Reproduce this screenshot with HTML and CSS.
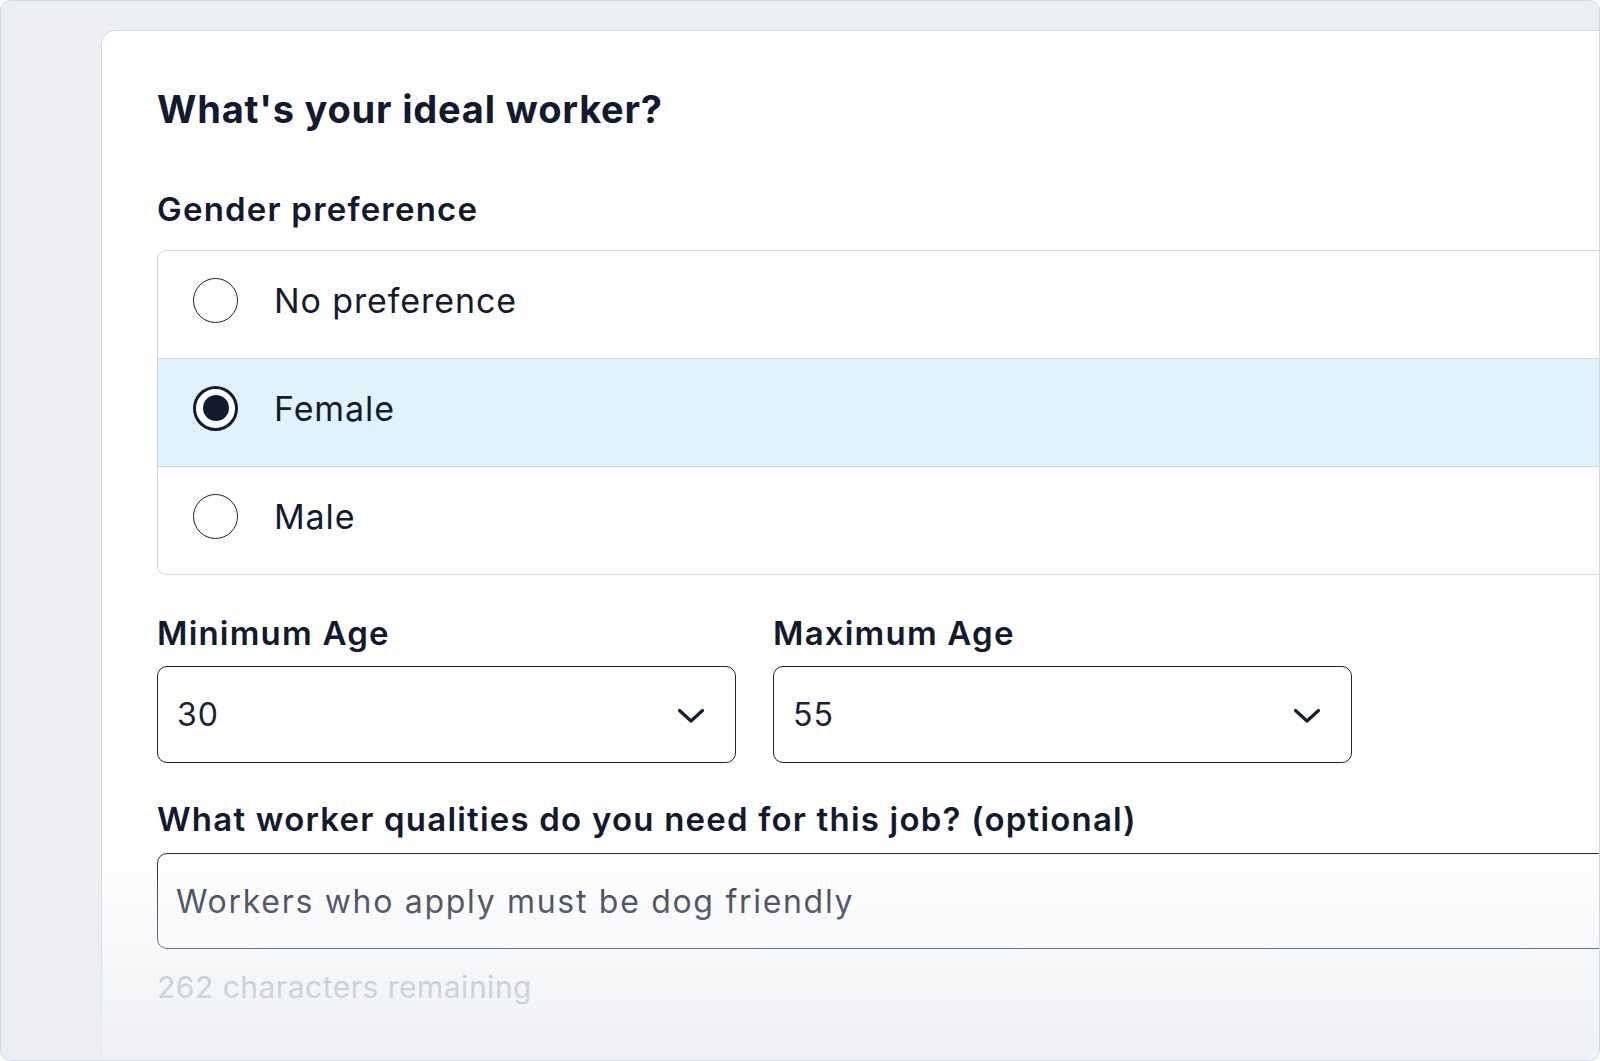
FILE: index.html
```html
<!DOCTYPE html>
<html lang="en">
<head>
<meta charset="utf-8">
<title>What's your ideal worker?</title>
<link rel="stylesheet" href="styles.css">
</head>
<body>
<div class="frame">
  <div class="card">
    <h1 class="title">What's your ideal worker?</h1>

    <div class="label label-gender">Gender preference</div>
    <div class="radio-group">
      <div class="option">
        <span class="radio"></span>
        <span class="option-text">No preference</span>
      </div>
      <div class="option selected">
        <span class="radio checked"><span class="dot"></span></span>
        <span class="option-text">Female</span>
      </div>
      <div class="option">
        <span class="radio"></span>
        <span class="option-text">Male</span>
      </div>
    </div>

    <div class="ages">
      <div class="field">
        <div class="label">Minimum Age</div>
        <div class="select">
          <span class="select-value">30</span>
          <svg class="chevron" width="28" height="16" viewBox="0 0 28 16"><path d="M2.5 2.5 L14 13 L25.5 2.5" fill="none" stroke="#161d31" stroke-width="3.2" stroke-linecap="round" stroke-linejoin="round"/></svg>
        </div>
      </div>
      <div class="field">
        <div class="label">Maximum Age</div>
        <div class="select">
          <span class="select-value">55</span>
          <svg class="chevron" width="28" height="16" viewBox="0 0 28 16"><path d="M2.5 2.5 L14 13 L25.5 2.5" fill="none" stroke="#161d31" stroke-width="3.2" stroke-linecap="round" stroke-linejoin="round"/></svg>
        </div>
      </div>
    </div>

    <div class="label label-qualities">What worker qualities do you need for this job? (optional)</div>
    <div class="textbox">Workers who apply must be dog friendly</div>
    <div class="counter">262 characters remaining</div>
  </div>
  <div class="fade"></div>
</div>
</body>
</html>
```

FILE: styles.css
```css
* { box-sizing: border-box; }

html, body {
  margin: 0;
  padding: 0;
  background: #ffffff;
}

body {
  font-family: Inter, "Noto Sans", "Liberation Sans", sans-serif;
  color: #141b2f;
}

.frame {
  position: relative;
  width: 1600px;
  height: 1061px;
  background: #eceef2;
  border: 1px solid #d3d7e0;
  border-radius: 11px;
  overflow: hidden;
  padding: 29px 0 0 100px;
}

.card {
  width: 1560px;
  height: 1100px;
  background: #ffffff;
  border: 1px solid #d3d7e0;
  border-top-left-radius: 14px;
  padding: 55px 0 0 55px;
}

.title {
  margin: 0;
  font-size: 38px;
  line-height: 46px;
  font-weight: 700;
  color: #131a2e;
  letter-spacing: 0.8px;
}

.label {
  font-size: 33px;
  line-height: 36px;
  font-weight: 600;
  color: #131a2e;
  letter-spacing: 1.2px;
}

.label-gender {
  margin-top: 59px;
}

.radio-group {
  margin-top: 23px;
  border: 1px solid #d3d7e0;
  border-radius: 9px;
  overflow: hidden;
  width: 1500px;
}

.option {
  height: 107px;
  display: flex;
  align-items: center;
  padding: 0 0 9px 35px;
  gap: 36px;
}

.option + .option {
  height: 108px;
  border-top: 1px solid #d3d7e0;
}

.option.selected {
  background: #e0f3fd;
}

.radio {
  width: 45px;
  height: 45px;
  border-radius: 50%;
  border: 1.5px solid #1b2235;
  background: #ffffff;
  display: flex;
  align-items: center;
  justify-content: center;
  flex: none;
}

.radio.checked {
  border: 3px solid #141b2f;
}

.dot {
  width: 26px;
  height: 26px;
  border-radius: 50%;
  background: #141b2f;
}

.option-text {
  font-size: 34px;
  line-height: 41px;
  font-weight: 400;
  color: #141b2f;
  letter-spacing: 0.9px;
}

.ages {
  margin-top: 40px;
  display: grid;
  grid-template-columns: 579px 579px;
  column-gap: 37px;
}

.field .label {
  margin-bottom: 15px;
}

.select {
  height: 97px;
  border: 1.5px solid #1e2536;
  border-radius: 10px;
  display: flex;
  align-items: center;
  justify-content: space-between;
  padding: 0 30px 0 19px;
  background: #ffffff;
}

.select-value {
  font-size: 32px;
  line-height: 39px;
  color: #1a2134;
  letter-spacing: 1px;
}

.chevron {
  display: block;
  margin-top: 2px;
}

.label-qualities {
  margin-top: 38px;
}

.textbox {
  margin-top: 16px;
  height: 96px;
  width: 1500px;
  border: 1.5px solid #1e2536;
  border-radius: 10px;
  display: flex;
  align-items: center;
  padding: 0 0 0 18px;
  font-size: 32px;
  line-height: 39px;
  color: #262d41;
  letter-spacing: 1.7px;
}

.counter {
  margin-top: 20px;
  font-size: 30px;
  line-height: 36px;
  color: #a9aebb;
  letter-spacing: 0.5px;
}

.fade {
  position: absolute;
  left: 0;
  right: 0;
  bottom: 0;
  height: 220px;
  background: linear-gradient(to bottom, rgba(236, 238, 242, 0) 0%, rgba(236, 238, 242, 0.35) 45%, rgba(236, 238, 242, 0.85) 100%);
  pointer-events: none;
}
```
